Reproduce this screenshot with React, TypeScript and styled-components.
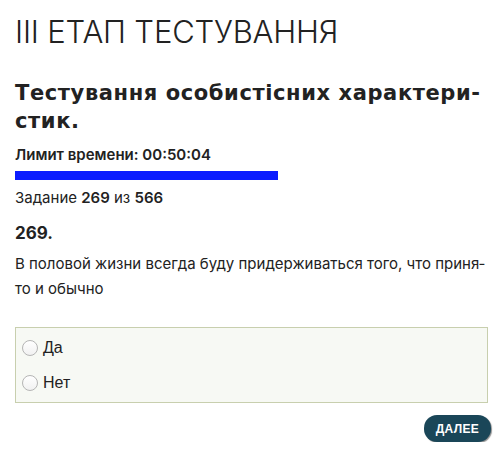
import * as React from 'react';
import styled, { createGlobalStyle } from 'styled-components';

const GlobalStyle = createGlobalStyle`
    html, body {
        margin: 0;
        padding: 0;
        background: #ffffff;
    }
    body {
        font-family: Inter, 'Liberation Sans', sans-serif;
        color: #222222;
    }
`

const Page = styled.div`
    width: 498px;
    padding: 12px 10px 0 15px;
    box-sizing: border-box;
`

const StageTitle = styled.h1`
    margin: 0;
    font-family: Inter, sans-serif;
    font-weight: 300;
    font-size: 31px;
    line-height: 40px;
    letter-spacing: -0.2px;
    color: #222222;
`

const TestTitle = styled.h2`
    margin: 27px 0 0;
    font-family: 'DejaVu Sans', Inter, sans-serif;
    font-size: 21px;
    line-height: 28px;
    font-weight: 700;
    letter-spacing: 0.6px;
    color: #222222;
    hyphens: manual;
    width: 473px;
`

const TimeLimit = styled.div`
    margin-top: 11px;
    font-size: 15px;
    font-weight: 600;
    line-height: 18px;
`

const ProgressBar = styled.div`
    margin-top: 7px;
    height: 9px;
    background: #0b1cff;
`

const TaskCounter = styled.div`
    margin-top: 7px;
    font-size: 15px;
    line-height: 22px;
    b {
        font-weight: 600;
    }
`

const TaskNumber = styled.div`
    margin-top: 13px;
    font-size: 17px;
    font-weight: 700;
    line-height: 22px;
`

const Question = styled.p`
    margin: 7px 0 0;
    font-size: 15px;
    line-height: 25px;
    width: 470px;
`

const Answers = styled.div`
    margin-top: 26px;
    border: 1px solid #c8cfae;
    background: #f7f9f4;
    padding: 7px 6px 6px;
    width: 473px;
    box-sizing: border-box;
    display: flex;
    flex-direction: column;
    gap: 9px;
`

const AnswerRow = styled.label`
    display: flex;
    align-items: center;
    gap: 5px;
    height: 26px;
    font-family: 'Liberation Sans', Arial, sans-serif;
    font-size: 16px;
    color: #222222;
`

const RadioCircle = styled.span`
    width: 14px;
    height: 14px;
    border-radius: 50%;
    border: 1px solid #b5b5b5;
    background: linear-gradient(#ffffff, #f1f1f1);
    box-sizing: content-box;
`

const Footer = styled.div`
    display: flex;
    justify-content: flex-end;
    width: 476px;
    margin-top: 12px;
`

const NextButton = styled.button`
    height: 27px;
    padding: 0 12px;
    border: none;
    border-radius: 13px;
    background: #1a4658;
    color: #ffffff;
    font-family: 'Liberation Sans', Arial, sans-serif;
    font-weight: 700;
    font-size: 12px;
    letter-spacing: 0.3px;
    box-shadow: 1px 1px 1px rgba(0, 0, 0, 0.45);
    cursor: pointer;
`

const answers = ['Да', 'Нет'];

const App: React.FC = () => {
    return (
        <Page>
            <GlobalStyle />
            <StageTitle>III ЕТАП ТЕСТУВАННЯ</StageTitle>
            <TestTitle>Тестування особистісних характери&shy;стик.</TestTitle>
            <TimeLimit>Лимит времени: 00:50:04</TimeLimit>
            <ProgressBar style={{ width: '263px' }} />
            <TaskCounter>
                Задание <b>269</b> из <b>566</b>
            </TaskCounter>
            <TaskNumber>269.</TaskNumber>
            <Question>
                В половой жизни всегда буду придерживаться того, что приня&shy;то и обычно
            </Question>
            <Answers>
                {answers.map(a => (
                    <AnswerRow key={a}>
                        <RadioCircle />
                        {a}
                    </AnswerRow>
                ))}
            </Answers>
            <Footer>
                <NextButton>ДАЛЕЕ</NextButton>
            </Footer>
        </Page>
    );
};

export default App;
